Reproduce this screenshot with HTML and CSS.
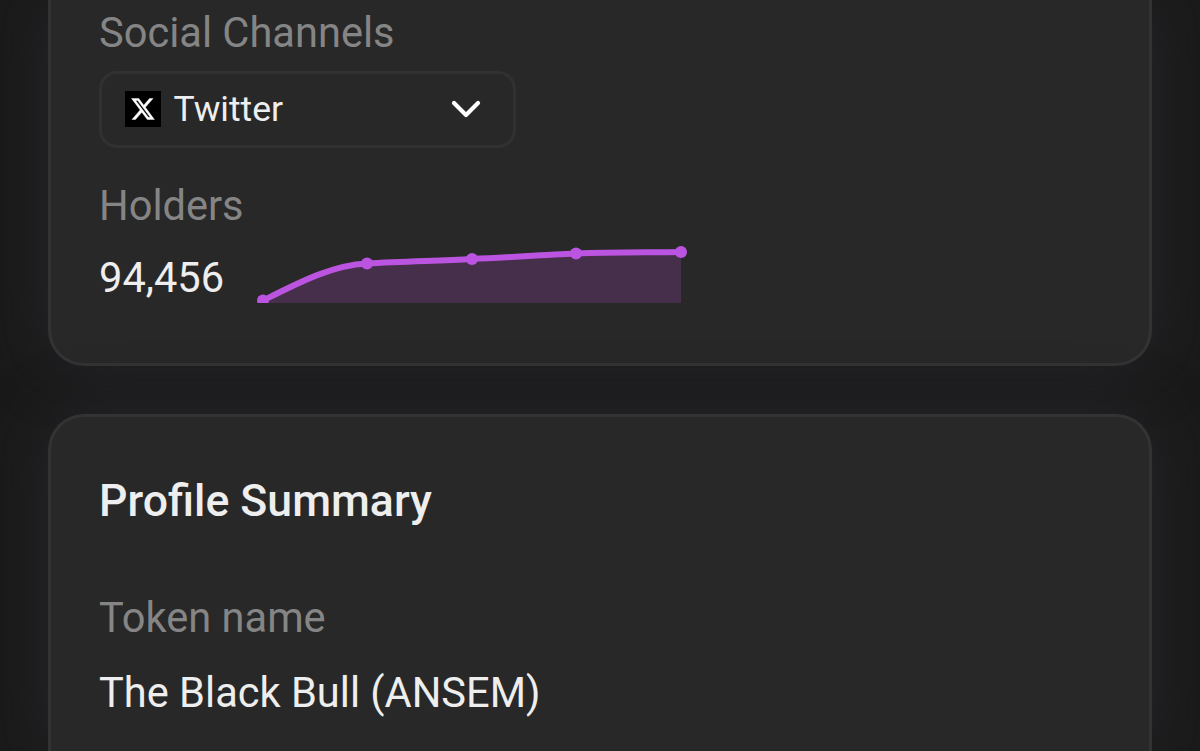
FILE: index.html
```html
<!DOCTYPE html>
<html lang="en">
<head>
  <meta charset="UTF-8" />
  <meta name="viewport" content="width=device-width, initial-scale=1.0"/>
  <title>Token Profile</title>
  <link rel="stylesheet" href="styles.css">
</head>
<body>
  <div class="card overview">
    <div class="label">Social Channels</div>
    <div class="select">
      <svg class="x-logo" viewBox="0 0 36 36">
        <rect width="36" height="36" fill="#000"/>
        <g transform="translate(5.200 5) scale(1.06 1.08)">
          <path fill="#fff" stroke="#fff" stroke-width=".4" d="M18.244 2.25h3.308l-7.227 8.26 8.502 11.24H16.17l-5.214-6.817L4.99 21.75H1.68l7.73-8.835L1.254 2.25H8.08l4.713 6.231zm-1.161 17.52h1.833L7.084 4.126H5.117z"/>
        </g>
      </svg>
      <span class="select-text">Twitter</span>
      <svg class="chevron" viewBox="0 0 32 20">
        <path d="M4 4l12 12 12-12" fill="none" stroke="#fff" stroke-width="4.200" stroke-linecap="round" stroke-linejoin="round"/>
      </svg>
    </div>
    <div class="label holders-label">Holders</div>
    <div class="holders">
      <span class="value">94,456</span>
      <svg class="sparkline" viewBox="0 0 434 60">
        <path class="area" d="M8 57.5C43 40 77 22 112 20.5C147 18 182 18 217 16C252 14.500 286 12 321 10.500C356 9 391 9.500 426 9V60H8z"/>
        <path class="line" d="M8 57.5C43 40 77 22 112 20.500C147 18 182 18 217 16C252 14.500 286 12 321 10.500C356 9 391 9.500 426 9"/>
        <g class="dots">
          <circle cx="8" cy="57.500" r="6"/>
          <circle cx="112" cy="20.500" r="6"/>
          <circle cx="217" cy="16" r="6"/>
          <circle cx="321" cy="10.500" r="6"/>
          <circle cx="426" cy="9" r="6"/>
        </g>
      </svg>
    </div>
  </div>
  <div class="card summary">
    <h2>Profile Summary</h2>
    <div class="label">Token name</div>
    <div class="value">The Black Bull (ANSEM)</div>
  </div>
</body>
</html>
```
FILE: styles.css
```css
* { box-sizing: border-box; }
body {
  margin: 0;
  height: 751px;
  padding: 0 48px;
  overflow: hidden;
  background: #1a1a1a;
  color: #eee;
  font-family: Roboto, sans-serif;
}
.card {
  padding: 0 48px;
  background: #282828;
  border: 3px solid #333;
  box-shadow: 0 0 60px rgba(40, 40, 46, 0.9);
}
.overview {
  height: 366px;
  padding-top: 9px;
  border-top: 0;
  border-radius: 0 0 36px 36px;
}
.summary {
  height: 337px;
  margin-top: 48px;
  padding-top: 58px;
  border-bottom: 0;
  border-radius: 36px 36px 0 0;
}
.label {
  color: #858585;
  font-size: 41.6px;
  line-height: 48px;
}
.value {
  font-size: 41.6px;
  line-height: 48px;
}
.select {
  display: flex;
  align-items: center;
  width: 417px;
  height: 77px;
  margin-top: 14px;
  padding: 0 31px 1px 23px;
  border: 3px solid #313131;
  border-radius: 18px;
}
.x-logo {
  width: 36px;
  height: 36px;
}
.select-text {
  margin-left: 12.5px;
  font-size: 35.5px;
  line-height: 42px;
}
.chevron {
  width: 32px;
  height: 20px;
  margin-left: auto;
}
.holders-label { margin-top: 34px; }
.holders {
  display: flex;
  align-items: center;
  margin-top: 13px;
  height: 60px;
}
.holders .value { padding-top: 9px; }
.sparkline {
  width: 434px;
  height: 60px;
  margin-left: 30.5px;
}
.area { fill: #462f4b; }
.line {
  fill: none;
  stroke: #bb54e0;
  stroke-width: 6;
}
.dots { fill: #bb54e0; }
h2 {
  margin: 0 0 67px;
  font-size: 44.6px;
  font-weight: 500;
  line-height: 52px;
}
.summary .value { margin-top: 27px; }
```
